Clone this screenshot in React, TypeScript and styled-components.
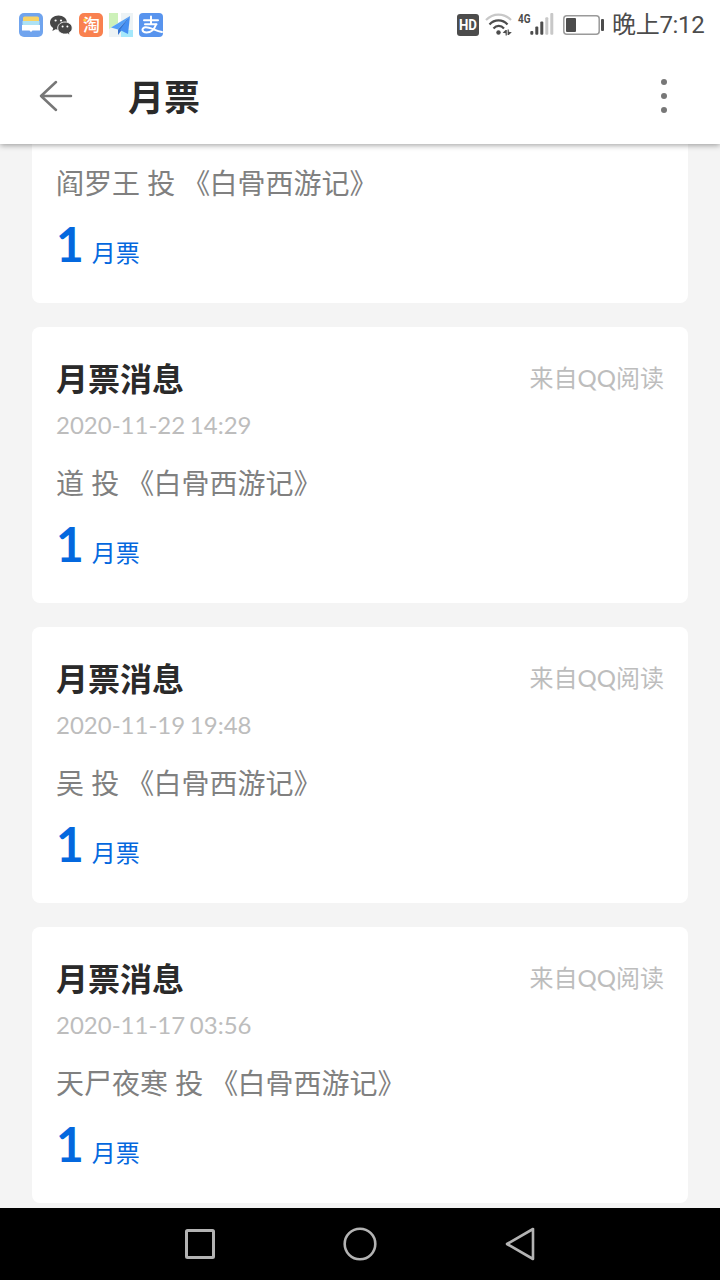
import React from 'react';
import styled, { createGlobalStyle } from 'styled-components';

const GlobalStyle = createGlobalStyle`
  * { box-sizing: border-box; }
  body { margin: 0; background: #f4f4f4; }
`;

const Screen = styled.div`
  width: 720px;
  height: 1280px;
  display: flex;
  flex-direction: column;
  overflow: hidden;
  background: #f4f4f4;
  font-family: Lato, 'Noto Sans CJK SC', sans-serif;
`;

const StatusBar = styled.div`
  height: 50px;
  flex: none;
  display: flex;
  align-items: center;
  justify-content: space-between;
  padding: 0 15px 0 19px;
  background: #fff;
  z-index: 2;
`;

const AppIcons = styled.div`
  display: flex;
  gap: 6px;
  svg { display: block; overflow: visible; }
`;

const SystemIcons = styled.div`
  display: flex;
  align-items: center;
  svg { display: block; overflow: visible; }
`;

const Clock = styled.span`
  margin-left: 8px;
  width: 93px;
  white-space: nowrap;
  font: 400 24px/48px Roboto, 'Noto Sans CJK SC', sans-serif;
  letter-spacing: -0.3px;
  color: #4c4c4c;
`;

const Header = styled.header`
  height: 94px;
  flex: none;
  display: flex;
  align-items: center;
  padding: 0 50px 2px 38px;
  background: #fff;
  box-shadow: 0 1px 6px rgba(0, 0, 0, 0.4);
  z-index: 1;
`;

const PageTitle = styled.h1`
  margin: 0 0 0 54px;
  padding-top: 1px;
  flex: 1;
  font-size: 36px;
  line-height: 52px;
  font-weight: 700;
  color: #2a2a2a;
`;

const List = styled.main`
  flex: 1;
  min-height: 0;
  display: flex;
  flex-direction: column;
  gap: 24px;
  padding: 0 32px 5px;
`;

const Card = styled.article<{ $cut?: boolean }>`
  height: ${(p) => (p.$cut ? 159 : 276)}px;
  flex: none;
  display: flex;
  flex-direction: column;
  justify-content: flex-end;
  padding: 0 24px 29px;
  background: #fff;
  border-radius: ${(p) => (p.$cut ? '0 0 8px 8px' : '8px')};
`;

const CardHead = styled.div`
  display: flex;
  justify-content: space-between;
  align-items: center;
  height: 46px;
`;

const CardTitle = styled.h2`
  margin: 0;
  padding-top: 2px;
  font-size: 32px;
  line-height: 46px;
  font-weight: 700;
  color: #2a2a2a;
`;

const Source = styled.span`
  font-size: 24px;
  line-height: 46px;
  color: #bdbdbd;
`;

const Time = styled.time`
  height: 47px;
  font-size: 24px;
  line-height: 48px;
  word-spacing: -1.5px;
  color: #bdbdbd;
`;

const Message = styled.p`
  margin: 0;
  height: 66px;
  font-size: 28px;
  line-height: 70px;
  color: #808080;
`;

const Bracket = styled.span<{ $left?: number; $right?: number }>`
  margin-left: ${(p) => p.$left ?? 0}px;
  margin-right: ${(p) => p.$right ?? 0}px;
`;

const Votes = styled.div`
  display: flex;
  align-items: baseline;
  gap: 8px;
  height: 60px;
  color: #0468de;
`;

const Count = styled.span`
  font-size: 48px;
  line-height: 60px;
  font-weight: 700;
`;

const Unit = styled.span`
  font-size: 24px;
  line-height: 36px;
`;

const NavBar = styled.nav`
  height: 72px;
  flex: none;
  display: flex;
  align-items: center;
  justify-content: center;
  gap: 124px;
  background: #000;
  svg { display: block; }
`;

const cjk = "'Noto Sans CJK SC', sans-serif";

const WalletIcon = () => (
  <svg width="24" height="24" viewBox="0 0 24 24">
    <rect width="24" height="24" rx="5" fill="#70a4ee" />
    <rect x="4" y="3.500" width="16" height="7" rx="1.500" fill="#f9d365" />
    <path d="M3.500 8h17v8h-17z" fill="#aee2f5" />
    <path d="M3 12h18v5.500h-7.500L12 19l-1.500-1.500H3z" fill="#fff" />
  </svg>
);

const WeChatIcon = () => (
  <svg width="24" height="24" viewBox="0 0 24 24">
    <path d="M9.500 2.500C4.800 2.500 1 5.600 1 9.600c0 2.300 1.300 4.200 3.200 5.500L3.400 18l3.200-1.700c.9.200 1.900.4 2.900.4 4.700 0 8.500-3.100 8.500-7.100s-3.800-7.100-8.500-7.100z" fill="#474747" />
    <path d="M16 9c-4.200 0-7.300 2.700-7.300 6s3.100 6.100 7.300 6.100c.9 0 1.700-.1 2.500-.4l2.600 1.400-.7-2.400c1.700-1.100 2.800-2.800 2.800-4.700 0-3.300-3.200-6-7.200-6z" fill="#474747" stroke="#fff" strokeWidth=".9" />
    <circle cx="6.600" cy="7.500" r="1.100" fill="#fff" />
    <circle cx="12" cy="7.500" r="1.100" fill="#fff" />
    <circle cx="13.600" cy="13.400" r="1" fill="#fff" />
    <circle cx="18.400" cy="13.400" r="1" fill="#fff" />
  </svg>
);

const TaobaoIcon = () => (
  <svg width="24" height="24" viewBox="0 0 24 24">
    <rect width="24" height="24" rx="5" fill="#f98150" />
    <text x="12.500" y="18" textAnchor="middle" fontSize="17" fontWeight="500" fontFamily={cjk} fill="#fff">淘</text>
    <circle cx="5.800" cy="7" r="1.600" fill="#ffd23f" />
  </svg>
);

const MapIcon = () => (
  <svg width="24" height="24" viewBox="0 0 24 24">
    <rect width="24" height="24" fill="#edf3f5" />
    <path d="M0 0h9v10L0 16z" fill="#cdf1b9" />
    <path d="M12 17h12v7H12z" fill="#a5e8fb" />
    <path d="M9 0h3v8l-3 2z" fill="#fff" />
    <path d="M21 3L2 14.500l7 2z" fill="#55a0f8" />
    <path d="M21 3L9 16.500V22l3-4z" fill="#3673cf" />
    <path d="M21 3L11 17l8 4z" fill="#458ff2" />
  </svg>
);

const AlipayIcon = () => (
  <svg width="24" height="24" viewBox="0 0 24 24">
    <rect width="24" height="24" rx="4" fill="#5894ee" />
    <g fill="none" stroke="#fff" strokeWidth="2" strokeLinecap="round">
      <path d="M5 7.300h14M12 3.500v7M6 11.300h11.500" />
      <path d="M17 11.500c-1.500 4.500-5 8-9.500 8-5 0-5.500-5-.7-5.200C11 14.200 16 17.500 23 19" />
    </g>
  </svg>
);

const HdIcon = () => (
  <svg width="22" height="22" viewBox="0 0 22 22">
    <rect width="22" height="22" rx="3" fill="#4c4c4c" />
    <text x="2" y="16.300" textLength="18" lengthAdjust="spacingAndGlyphs" fontSize="15" fontWeight="700" fontFamily="Roboto, sans-serif" fill="#fff">HD</text>
  </svg>
);

const WifiIcon = () => (
  <svg width="27" height="24" viewBox="0 0 27 24">
    <g fill="none" strokeWidth="2.200">
      <path d="M0 7C7-.3 18-.3 25 7" stroke="#c8c8c8" />
      <path d="M3.500 11.500c5-5.500 13-5.500 18 0M7.500 15.500c3-3.500 7.500-3.500 10.500 0" stroke="#4c4c4c" />
    </g>
    <circle cx="12.500" cy="19.500" r="2.200" fill="#4c4c4c" />
    <path d="M16.600 19.700l3-2.600h1.200v5.400h-1.200v-2.300zM25.800 19.300l-3 2.600h-1.200v-5.400h1.200v2.300z" fill="#4c4c4c" />
  </svg>
);

const SignalIcon = () => (
  <svg width="36" height="26" viewBox="0 0 36 26">
    <text x="0" y="10.800" textLength="12.500" lengthAdjust="spacingAndGlyphs" fontSize="13.500" fontWeight="700" fontFamily="Roboto, sans-serif" fill="#4c4c4c">4G</text>
    <g fill="#4c4c4c">
      <rect x="12.300" y="19" width="3" height="3.800" rx="1" />
      <rect x="17.300" y="14.500" width="3" height="8.300" rx="1" />
      <rect x="22.300" y="9.500" width="3" height="13.300" rx="1" />
    </g>
    <g fill="#c8c8c8">
      <rect x="27.300" y="5.300" width="3" height="17.500" rx="1" />
      <rect x="32.300" y="1" width="3" height="21.800" rx="1" />
    </g>
  </svg>
);

const BatteryIcon = () => (
  <svg width="41" height="20" viewBox="0 0 41 20">
    <rect x=".8" y=".8" width="35.400" height="18.400" rx="3" fill="none" stroke="#9a9a9a" strokeWidth="1.500" />
    <rect x="3" y="3" width="10" height="14" rx="1" fill="#4c4c4c" />
    <rect x="38" y="4" width="3" height="12" rx="1" fill="#4c4c4c" />
  </svg>
);

const StatusGap = styled.i<{ $w: number }>`
  width: ${(p) => p.$w}px;
`;

const messages = [
  { time: '2020-11-22 14:29', reader: '道' },
  { time: '2020-11-19 19:48', reader: '吴' },
  { time: '2020-11-17 03:56', reader: '天尸夜寒' },
];

const VoteBody = ({ reader }: { reader: string }) => (
  <>
    <Message>
      {reader} 投 <Bracket $right={-1}>《</Bracket>白骨西游记<Bracket>》</Bracket>
    </Message>
    <Votes>
      <Count>1</Count>
      <Unit>月票</Unit>
    </Votes>
  </>
);

export default function App() {
  return (
    <Screen lang="zh-CN">
      <GlobalStyle />
      <StatusBar>
        <AppIcons>
          <WalletIcon />
          <WeChatIcon />
          <TaobaoIcon />
          <MapIcon />
          <AlipayIcon />
        </AppIcons>
        <SystemIcons>
          <HdIcon />
          <StatusGap $w={7} />
          <WifiIcon />
          <StatusGap $w={5} />
          <SignalIcon />
          <StatusGap $w={9} />
          <BatteryIcon />
          <Clock>晚上7:12</Clock>
        </SystemIcons>
      </StatusBar>
      <Header>
        <svg width="36" height="36" viewBox="0 0 36 36" fill="none" stroke="#777" strokeWidth="2.500" strokeLinecap="round" strokeLinejoin="round">
          <path d="M18 4L3 18l15 14M3 18h30" />
        </svg>
        <PageTitle>月票</PageTitle>
        <svg width="12" height="36" viewBox="0 0 12 36" fill="#777">
          <circle cx="6" cy="4" r="3" />
          <circle cx="6" cy="18" r="3" />
          <circle cx="6" cy="32" r="3" />
        </svg>
      </Header>
      <List>
        <Card $cut>
          <VoteBody reader="阎罗王" />
        </Card>
        {messages.map((m) => (
          <Card key={m.time}>
            <CardHead>
              <CardTitle>月票消息</CardTitle>
              <Source>来自QQ阅读</Source>
            </CardHead>
            <Time>{m.time}</Time>
            <VoteBody reader={m.reader} />
          </Card>
        ))}
      </List>
      <NavBar>
        <svg width="36" height="36" viewBox="0 0 36 36" fill="none" stroke="#b3b3b3" strokeWidth="3">
          <rect x="4.500" y="4.500" width="27" height="27" rx="1" />
        </svg>
        <svg width="36" height="36" viewBox="0 0 36 36" fill="none" stroke="#b3b3b3" strokeWidth="2.600">
          <circle cx="18" cy="18" r="15.300" />
        </svg>
        <svg width="36" height="36" viewBox="0 0 36 36" fill="none" stroke="#b3b3b3" strokeWidth="2.600" strokeLinejoin="round">
          <path d="M31 3v30L5 18z" />
        </svg>
      </NavBar>
    </Screen>
  );
}
